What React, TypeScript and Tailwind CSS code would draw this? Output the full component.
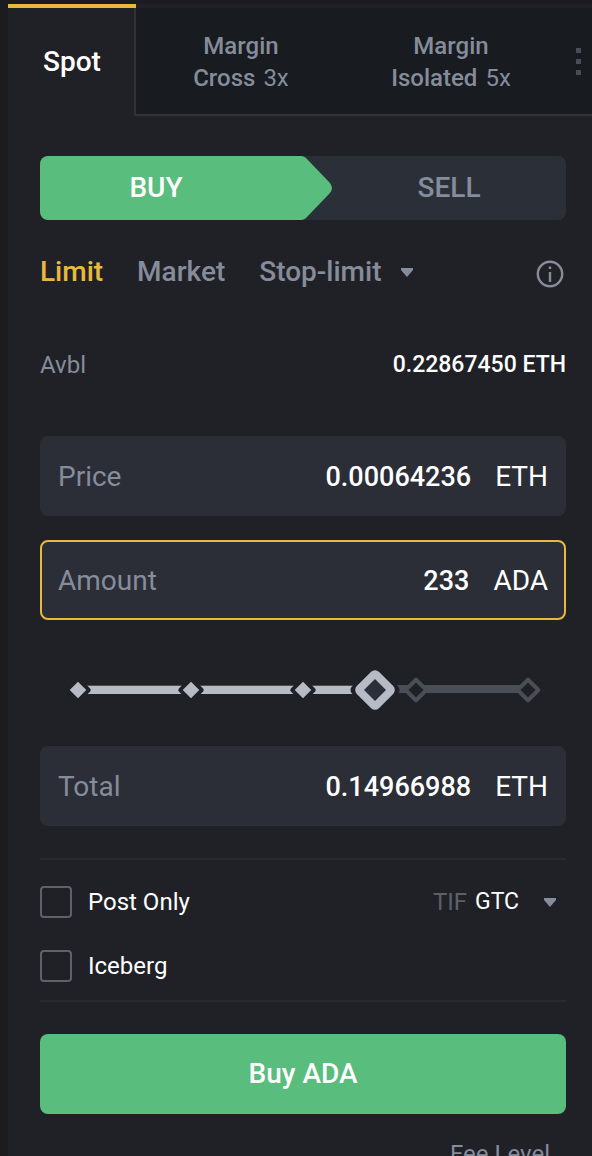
import { useState } from "react";
import clsx from "clsx";

const STOPS = [0, 25, 50, 75, 100];

function Caret({ className }: { className?: string }) {
  return (
    <svg viewBox="0 0 12 9" className={clsx("h-[9px] w-3 shrink-0 fill-[#858c9b]", className)} aria-hidden="true">
      <path d="M0 0h12v2L6 9 0 2z" />
    </svg>
  );
}

function MarginTab({ kind, leverage }: { kind: string; leverage: string }) {
  return (
    <button
      type="button"
      role="tab"
      aria-selected={false}
      className="flex-1 border-b-2 border-[#2e3239] bg-[#181b20] pt-[2px] text-2xl leading-8 font-medium text-[#858c9b]"
    >
      <span className="block">Margin</span>
      <span className="flex justify-center gap-2">
        <span>{kind}</span>
        <span className="font-normal">{leverage}</span>
      </span>
    </button>
  );
}

function Field({
  id,
  label,
  unit,
  initial,
  active = false,
}: {
  id: string;
  label: string;
  unit: string;
  initial: string;
  active?: boolean;
}) {
  const [value, setValue] = useState(initial);
  return (
    <div
      className={clsx(
        "flex h-20 items-center rounded-lg border-2 bg-[#2b2e36] px-4 pt-[2px] text-[28px] leading-9",
        active ? "border-[#e9b93e]" : "border-[#2b2e36]",
      )}
    >
      <label htmlFor={id} className="text-[#858c9b]">
        {label}
      </label>
      <input
        id={id}
        value={value}
        onChange={(e) => setValue(e.target.value)}
        inputMode="decimal"
        className="mr-6 min-w-0 flex-1 bg-transparent text-right text-[27px] font-medium text-white outline-none"
      />
      <span className="text-[28px] text-white">{unit}</span>
    </div>
  );
}

function AmountSlider() {
  const [value, setValue] = useState(66);
  return (
    <div className="mt-12 mr-[38px] mb-[34px] ml-[38px] h-11">
      <div className="relative h-full">
        <div className="absolute inset-x-0 top-[17px] h-2 bg-[#4a4e57]" />
        <div className="absolute left-0 top-[18px] h-2 bg-[#b7bbc5]" style={{ width: `${value}%` }} />
        {STOPS.map((stop) => (
          <svg
            key={stop}
            viewBox="-16 -16 32 32"
            className="absolute top-[6px] size-8 -translate-x-1/2"
            style={{ left: `${stop}%` }}
            aria-hidden="true"
          >
            {stop <= value ? (
              <g>
                <path
                  d="M0-9.500 9.500 0 0 9.500-9.500 0z"
                  fill="#202126"
                  stroke="#202126"
                  strokeWidth="6"
                  strokeLinejoin="round"
                />
                <path d="M0-8.300 8.300 0 0 8.300-8.300 0z" fill="#b7bbc5" />
              </g>
            ) : (
              <path
                d="M0-10.300 10.300 0 0 10.300-10.300 0z"
                fill="#202126"
                stroke="#4a4e57"
                strokeWidth="4"
                strokeLinejoin="round"
              />
            )}
          </svg>
        ))}
        <svg
          viewBox="-28 -28 56 56"
          className="absolute -top-[6px] size-14 -translate-x-1/2"
          style={{ left: `${value}%` }}
          aria-hidden="true"
        >
          <path d="M0-19.500 19.500 0 0 19.500-19.500 0z" fill="#202126" stroke="#202126" strokeWidth="10" strokeLinejoin="round" />
          <path d="M0-14.300 14.300 0 0 14.300-14.300 0z" fill="#b7bbc5" stroke="#b7bbc5" strokeWidth="11" strokeLinejoin="round" />
          <path d="M0-11 11 0 0 11-11 0z" fill="#2b2f38" />
        </svg>
        <input
          type="range"
          min={0}
          max={100}
          value={value}
          onChange={(e) => setValue(Number(e.target.value))}
          aria-label="Share of balance"
          className="absolute inset-0 h-full w-full cursor-pointer opacity-0"
        />
      </div>
    </div>
  );
}

function Check({ label }: { label: string }) {
  return (
    <label className="flex items-center gap-4 text-2xl leading-8 text-white">
      <input
        type="checkbox"
        className="size-8 appearance-none rounded-sm border-2 border-[#5c626c] checked:bg-[#e9b93e]"
      />
      {label}
    </label>
  );
}

export default function App() {
  return (
    <div className="h-screen overflow-y-auto bg-[#1b1b20] pt-1 pl-2 font-['Roboto',sans-serif] [scrollbar-width:none]">
      <main className="min-h-full bg-[#202126]">
        <div role="tablist" className="flex h-28">
          <button
            type="button"
            role="tab"
            aria-selected={true}
            className="w-32 shrink-0 border-t-4 border-t-[#e9b93e] text-[28px] font-medium text-white"
          >
            Spot
          </button>
          <div className="-ml-[2px] mt-1 flex flex-1 border-l-2 border-[#2e3239]">
            <MarginTab kind="Cross" leverage="3x" />
            <MarginTab kind="Isolated" leverage="5x" />
            <button
              type="button"
              aria-label="More"
              className="flex w-9 flex-col items-center justify-center gap-[6px] border-b-2 border-[#2e3239] bg-[#181b20] pl-2"
            >
              <span className="size-[5px] bg-[#474c57]" />
              <span className="size-[5px] bg-[#474c57]" />
              <span className="size-[5px] bg-[#474c57]" />
            </button>
          </div>
        </div>

        <form className="pt-10 pr-[26px] pl-8" onSubmit={(e) => e.preventDefault()}>
          <div className="flex h-16 rounded-lg bg-[#2b3038] text-[28px] font-medium">
            <button type="button" className="flex w-[calc(50%+29px)] items-stretch text-white">
              <span className="flex flex-1 items-center justify-center rounded-l-lg bg-[#58bd7d] pr-7">BUY</span>
              <svg viewBox="0 0 32 64" className="h-16 w-8 fill-[#58bd7d]" aria-hidden="true">
                <path d="M-1 0H1Q4 0 6 2L29.500 26.500Q34.500 32 29.500 37.500L6 62Q4 64 1 64H-1Z" />
              </svg>
            </button>
            <button type="button" className="flex-1 text-[#858c9b]">
              SELL
            </button>
          </div>

          <div className="mt-8 flex h-10 items-center gap-[34px] text-[28px] font-medium text-[#858c9b]">
            <button type="button" className="text-[#e9b93e]">
              Limit
            </button>
            <button type="button">Market</button>
            <button type="button" className="flex items-center gap-5">
              Stop-limit
              <Caret />
            </button>
            <button type="button" aria-label="Order type help" className="ml-auto">
              <svg viewBox="0 0 32 32" className="size-8" fill="none" stroke="#858c9b" strokeWidth="2.400" aria-hidden="true">
                <circle cx="16" cy="18" r="12.200" />
                <path d="M16 16v10M16 10.500v2.500" />
              </svg>
            </button>
          </div>

          <div className="mt-[57px] flex h-8 items-center justify-between text-2xl leading-8">
            <span className="text-[#858c9b]">Avbl</span>
            <span className="text-[23px] font-medium text-white">0.22867450 ETH</span>
          </div>

          <div className="mt-[55px] flex flex-col gap-6">
            <Field id="price" label="Price" unit="ETH" initial="0.00064236" />
            <Field id="amount" label="Amount" unit="ADA" initial="233" active />
          </div>
          <AmountSlider />
          <Field id="total" label="Total" unit="ETH" initial="0.14966988" />

          <div className="mt-8 flex flex-col gap-8 border-y-2 border-[#282a30] pt-[26px] pb-[18px]">
            <div className="flex items-center justify-between">
              <Check label="Post Only" />
              <div className="flex items-center gap-2 pr-[10px] text-2xl leading-8">
                <label htmlFor="tif" className="text-[#5b616c]">
                  TIF
                </label>
                <div className="relative flex items-center">
                  <select id="tif" className="appearance-none bg-transparent pr-9 text-[23px] text-white outline-none">
                    <option>GTC</option>
                    <option>IOC</option>
                    <option>FOK</option>
                  </select>
                  <Caret className="pointer-events-none absolute right-0" />
                </div>
              </div>
            </div>
            <div className="flex">
              <Check label="Iceberg" />
            </div>
          </div>

          <button
            type="submit"
            className="mt-8 h-20 w-full rounded-lg bg-[#58bd7d] text-[28px] font-medium text-white"
          >
            Buy ADA
          </button>
          <a href="#fee" className="mt-6 block pr-4 pb-6 text-right text-2xl leading-8 text-[#858c9b]">
            Fee Level
          </a>
        </form>
      </main>
    </div>
  );
}
